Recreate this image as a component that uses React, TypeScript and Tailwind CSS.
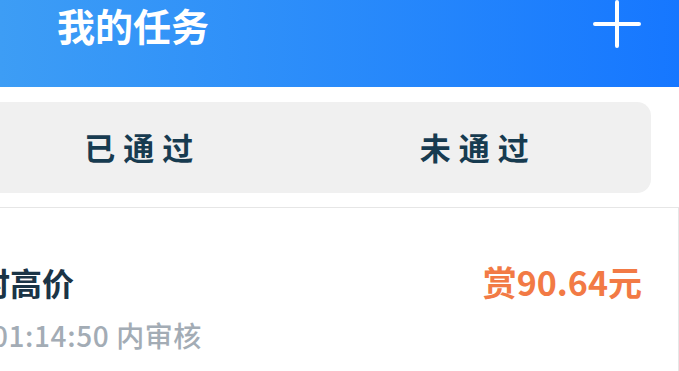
const cjk = { fontFamily: '"Noto Sans CJK SC", "Noto Sans", sans-serif' };

function PlusIcon() {
  return (
    <svg width="48" height="48" viewBox="0 0 48 48" fill="none">
      <path d="M24 2v44M2 24h44" stroke="white" strokeWidth="4" strokeLinecap="round" />
    </svg>
  );
}

export default function App() {
  return (
    <div className="h-[371px] w-[679px] overflow-hidden bg-white" style={cjk}>
      <header className="flex h-[87px] items-start justify-between bg-linear-to-r from-[#3d9df5] to-[#1677ff] pl-[57px] pr-[38px]">
        <div className="flex h-[48px] items-center">
          <h1 className="mt-[1px] text-[38px] font-bold leading-none text-white">我的任务</h1>
        </div>
        <PlusIcon />
      </header>

      <div className="mt-[15px] ml-[-20px] flex h-[91px] w-[671px] rounded-[14px] bg-[#f0f0f0]">
        <button className="flex-1 pr-[10px] text-[31px] font-bold tracking-[8px] text-[#173b50]">已通过</button>
        <button className="flex-1 pr-[10px] text-[31px] font-bold tracking-[8px] text-[#173b50]">未通过</button>
      </div>

      <div className="mt-[14px] ml-[-84px] w-[763px] border-t border-r border-[#e6e6e6] pb-[40px] pl-[30px] pr-[36px] pt-[57px]">
        <div className="flex items-center justify-between">
          <div className="text-[32px] font-bold leading-none text-[#1b3446]">限时高价</div>
          <div className="text-[34px] font-bold leading-none text-[#f27a45]">赏90.64元</div>
        </div>
        <div className="mt-[22px] ml-[46px] text-[28px] font-medium leading-none tracking-[0.6px] text-[#a3acb5]">01:14:50 内审核</div>
      </div>
    </div>
  );
}
